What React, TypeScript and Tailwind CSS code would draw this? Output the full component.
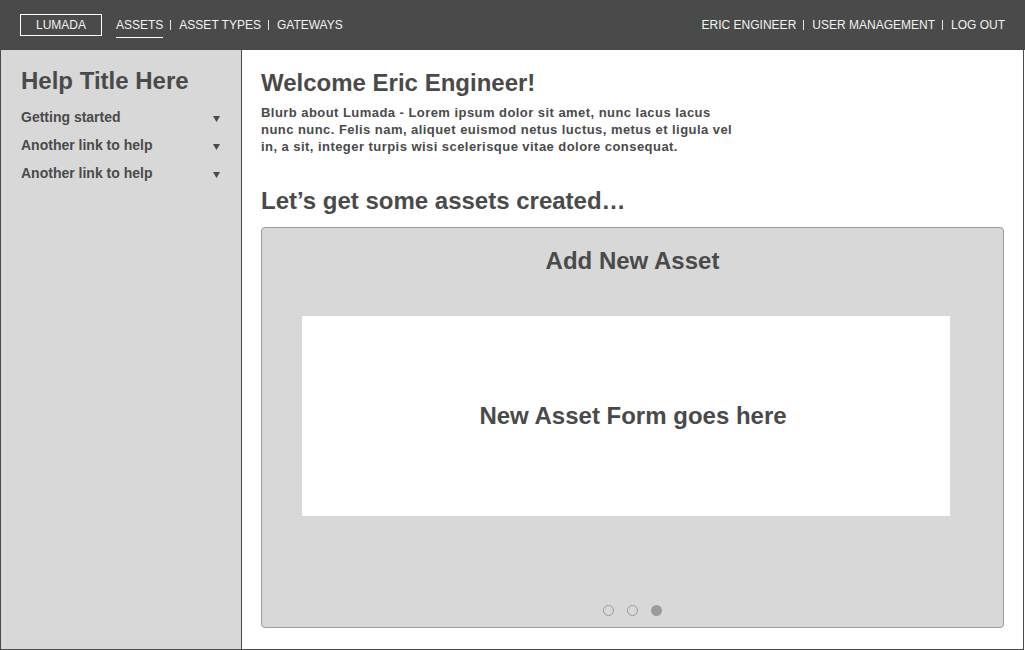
const ink = 'text-[#4a4a4a]';

function Sep({ light }: { light?: boolean }) {
  return <span className={`ml-[7px] mr-[8px] inline-block h-[10px] w-px ${light ? 'bg-[#e6e6e6]' : 'bg-[#4a4a4a]'}`} />;
}

function Caret() {
  return (
    <svg width="7" height="6" viewBox="0 0 7 6" className="mt-[3px] shrink-0">
      <path d="M0 0 H7 L3.5 6 Z" fill="#4a4a4a" />
    </svg>
  );
}

const helpLinks = ['Getting started', 'Another link to help', 'Another link to help'];

export default function App() {
  return (
    <div className="flex h-[650px] w-[1025px] flex-col bg-white font-['Liberation_Sans',Arial,sans-serif]">
      {/* top bar */}
      <header className="flex h-[50px] shrink-0 items-center justify-between bg-[#4a4a4a] pl-[20px] pr-[20px] text-[12px] text-[#f2f2f2]">
        <div className="flex items-center">
          <div className="flex h-[22px] w-[82px] items-center justify-center border border-white">LUMADA</div>
          <nav className="ml-[14px] flex items-center">
            <span className="relative">
              ASSETS
              <span className="absolute -bottom-[4px] left-0 h-px w-full bg-white" />
            </span>
            <Sep light />
            <span>ASSET TYPES</span>
            <Sep light />
            <span>GATEWAYS</span>
          </nav>
        </div>
        <nav className="flex items-center">
          <span>ERIC ENGINEER</span>
          <Sep light />
          <span>USER MANAGEMENT</span>
          <Sep light />
          <span>LOG OUT</span>
        </nav>
      </header>

      <div className="flex min-h-0 w-[1024px] flex-1 border-b border-r border-[#4a4a4a]">
        {/* help sidebar */}
        <aside className={`flex w-[242px] shrink-0 flex-col border-l border-r border-[#4a4a4a] bg-[#d8d8d8] pl-[20px] pr-[21px] pt-[17px] ${ink}`}>
          <h2 className="text-[24px] font-bold leading-7">Help Title Here</h2>
          <ul className="mt-[12px] flex flex-col gap-[8px]">
            {helpLinks.map((l, i) => (
              <li key={i} className="flex h-5 items-center justify-between text-[14px] font-bold">
                <span>{l}</span>
                <Caret />
              </li>
            ))}
          </ul>
        </aside>

        {/* main */}
        <main className={`flex flex-1 flex-col pl-[19px] pr-[19px] pt-[19px] pb-[21px] ${ink}`}>
          <h1 className="text-[24px] font-bold leading-7">Welcome Eric Engineer!</h1>
          <p className="mt-[7px] w-[480px] text-[13px] font-bold leading-[17px] tracking-[0.45px]">
            Blurb about Lumada - Lorem ipsum dolor sit amet, nunc lacus lacus nunc nunc. Felis nam, aliquet euismod
            netus luctus, metus et ligula vel in, a sit, integer turpis wisi scelerisque vitae dolore consequat.
          </p>
          <h2 className="mt-[32px] text-[24px] font-bold leading-7">Let’s get some assets created…</h2>

          <section className="mt-[12px] flex flex-1 flex-col rounded-[4px] border border-[#9b9b9b] bg-[#d8d8d8] pt-[19px] pb-[11px]">
            <h3 className="text-center text-[24px] font-bold leading-7">Add New Asset</h3>
            <div className="ml-[40px] mt-[41px] flex h-[200px] w-[648px] items-center justify-center bg-white pl-[14px] text-[24px] font-bold">
              New Asset Form goes here
            </div>
            <div className="mt-auto flex justify-center gap-[13px]">
              <span className="h-[11px] w-[11px] rounded-full border border-[#9b9b9b]" />
              <span className="h-[11px] w-[11px] rounded-full border border-[#9b9b9b]" />
              <span className="h-[11px] w-[11px] rounded-full bg-[#9b9b9b]" />
            </div>
          </section>
        </main>
      </div>
    </div>
  );
}
